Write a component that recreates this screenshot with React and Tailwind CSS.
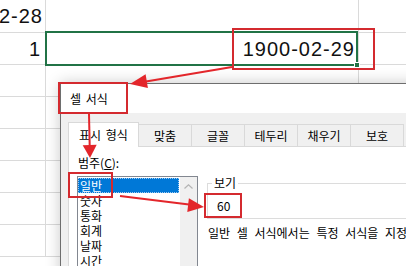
export default function App() {
  return (
    <div className="relative w-[406px] h-[266px] overflow-hidden bg-white">
      {/* Spreadsheet */}
      <div className="flex flex-col [font-family:'Liberation_Sans',sans-serif] text-[20px] tracking-[1px] text-[#111]">
        <div className="flex h-[33px] border-b border-[#dadada]">
          <div className="w-[46px] shrink-0 border-r border-[#dadada] flex items-center justify-end overflow-hidden pr-[2px] whitespace-nowrap">1900-02-28</div>
          <div className="w-[313px] shrink-0 border-r border-[#dadada]" />
          <div className="flex-1" />
        </div>
        <div className="flex h-[32px] border-b border-[#dadada]">
          <div className="w-[46px] shrink-0 border-r border-[#dadada] flex items-center justify-end overflow-hidden pr-[4px] whitespace-nowrap">1</div>
          <div className="relative w-[313px] shrink-0 border-r border-[#dadada] flex items-center justify-end pr-[3px] whitespace-nowrap">
            1900-02-29
            <div className="absolute -left-[1px] -top-[2px] right-0 -bottom-[2px] border-2 border-[#217346]">
              <div className="absolute -right-[4px] -bottom-[4px] w-[6px] h-[6px] bg-[#217346] border border-white" />
            </div>
          </div>
          <div className="flex-1" />
        </div>
        <div className="flex h-[32px] border-b border-[#dadada]">
          <div className="w-[46px] shrink-0 border-r border-[#dadada]" />
          <div className="w-[313px] shrink-0 border-r border-[#dadada]" />
          <div className="flex-1" />
        </div>
        <div className="flex h-[32px] border-b border-[#dadada]">
          <div className="w-[46px] shrink-0 border-r border-[#dadada]" />
          <div className="w-[313px] shrink-0 border-r border-[#dadada]" />
          <div className="flex-1" />
        </div>
        <div className="flex h-[32px] border-b border-[#dadada]">
          <div className="w-[46px] shrink-0 border-r border-[#dadada]" />
          <div className="w-[313px] shrink-0 border-r border-[#dadada]" />
          <div className="flex-1" />
        </div>
        <div className="flex h-[32px] border-b border-[#dadada]">
          <div className="w-[46px] shrink-0 border-r border-[#dadada]" />
          <div className="w-[313px] shrink-0 border-r border-[#dadada]" />
          <div className="flex-1" />
        </div>
        <div className="flex h-[32px] border-b border-[#dadada]">
          <div className="w-[46px] shrink-0 border-r border-[#dadada]" />
          <div className="w-[313px] shrink-0 border-r border-[#dadada]" />
          <div className="flex-1" />
        </div>
        <div className="flex h-[32px] border-b border-[#dadada]">
          <div className="w-[46px] shrink-0 border-r border-[#dadada]" />
          <div className="w-[313px] shrink-0 border-r border-[#dadada]" />
          <div className="flex-1" />
        </div>
      </div>

      {/* Dialog window */}
      <div className="absolute left-[60px] top-[83px] w-[390px] h-[200px] bg-[#f0f0f0] border border-[#6e6e6e] shadow-[0_0_14px_rgba(0,0,0,0.22)] [font-family:'Noto_Sans_CJK_KR',sans-serif] text-[12px] text-black">
        <div className="h-[29px] bg-white flex items-center pl-[9px] [word-spacing:2px]">셀 서식</div>
        <div className="pl-[7px] pt-[9px]">
          <div className="flex items-end h-[25px]">
            <div className="relative z-10 w-[71px] h-[25px] bg-white border-x border-t border-[#d9d9d9] flex items-center justify-center [word-spacing:2px]">표시 형식</div>
            <div className="w-[54px] -ml-[1px] h-[23px] border border-[#d9d9d9] flex items-center justify-center">맞춤</div>
            <div className="w-[54px] -ml-[1px] h-[23px] border border-[#d9d9d9] flex items-center justify-center">글꼴</div>
            <div className="w-[54px] -ml-[1px] h-[23px] border border-[#d9d9d9] flex items-center justify-center">테두리</div>
            <div className="w-[54px] -ml-[1px] h-[23px] border border-[#d9d9d9] flex items-center justify-center">채우기</div>
            <div className="w-[54px] -ml-[1px] h-[23px] border border-[#d9d9d9] flex items-center justify-center">보호</div>
          </div>
          <div className="-mt-[1px] h-[200px] bg-white border border-[#d9d9d9] flex pl-[8px] pt-[8px]">
            {/* Category list */}
            <div className="w-[121px] shrink-0 flex flex-col">
              <div className="leading-[16px] pl-[1px]">
                범주(<span className="underline">C</span>):
              </div>
              <div className="mt-[5px] h-[100px] border border-[#828790] flex">
                <div className="flex-1 flex flex-col pt-[1px] pr-[1px]">
                  <div className="h-[15px] leading-[15px] pl-[2px] bg-[#0078d7] text-white outline-1 outline-dotted outline-[#9fcaf0] -outline-offset-1">일반</div>
                  <div className="h-[15px] leading-[15px] pl-[2px]">숫자</div>
                  <div className="h-[15px] leading-[15px] pl-[2px]">통화</div>
                  <div className="h-[15px] leading-[15px] pl-[2px]">회계</div>
                  <div className="h-[15px] leading-[15px] pl-[2px]">날짜</div>
                  <div className="h-[15px] leading-[15px] pl-[2px]">시간</div>
                </div>
                <div className="w-[17px] bg-[#f0f0f0] flex flex-col items-center pt-[7px]">
                  <svg width="9" height="5" viewBox="0 0 9 5">
                    <path d="M0.5 4.5 L4.5 0.8 L8.5 4.5" fill="none" stroke="#b4b4b4" strokeWidth="1.2" />
                  </svg>
                </div>
              </div>
            </div>
            {/* Preview area */}
            <div className="ml-[9px] flex-1 flex flex-col pt-[20px]">
              <fieldset className="border border-[#dcdcdc] pl-[4px] pb-[4px]">
                <legend className="px-[2px] leading-[16px]">보기</legend>
                <div className="mt-[7px] ml-[5px] leading-[16px]">60</div>
              </fieldset>
              <div className="mt-[6px] ml-[1px] leading-[16px] whitespace-nowrap [word-spacing:4px]">일반 셀 서식에서는 특정 서식을 지정하지 않습니다.</div>
            </div>
          </div>
        </div>
      </div>

      {/* Annotations */}
      <svg className="absolute left-0 top-0 z-20 pointer-events-none" width="406" height="266" viewBox="0 0 406 266">
        <g fill="none" stroke="#d42a2f" strokeWidth="2">
          <rect x="233" y="29" width="141" height="40" />
          <rect x="59" y="83" width="68" height="30" />
          <rect x="69" y="173" width="43" height="24" />
          <rect x="205" y="194" width="36" height="23" />
        </g>
        <g stroke="#e3262b" strokeWidth="2" fill="#e3262b">
          <line x1="232" y1="67" x2="146" y2="81.4" />
          <polygon points="130,84 145.6,74.3 147.9,88.1" stroke="none" />
          <line x1="89" y1="114" x2="89.7" y2="146" />
          <polygon points="90,158 82.7,145.2 96.7,144.8" stroke="none" />
          <line x1="120" y1="196" x2="189" y2="204.5" />
          <polygon points="204,207 188.9,198.2 187.3,212.1" stroke="none" />
        </g>
      </svg>
    </div>
  );
}
